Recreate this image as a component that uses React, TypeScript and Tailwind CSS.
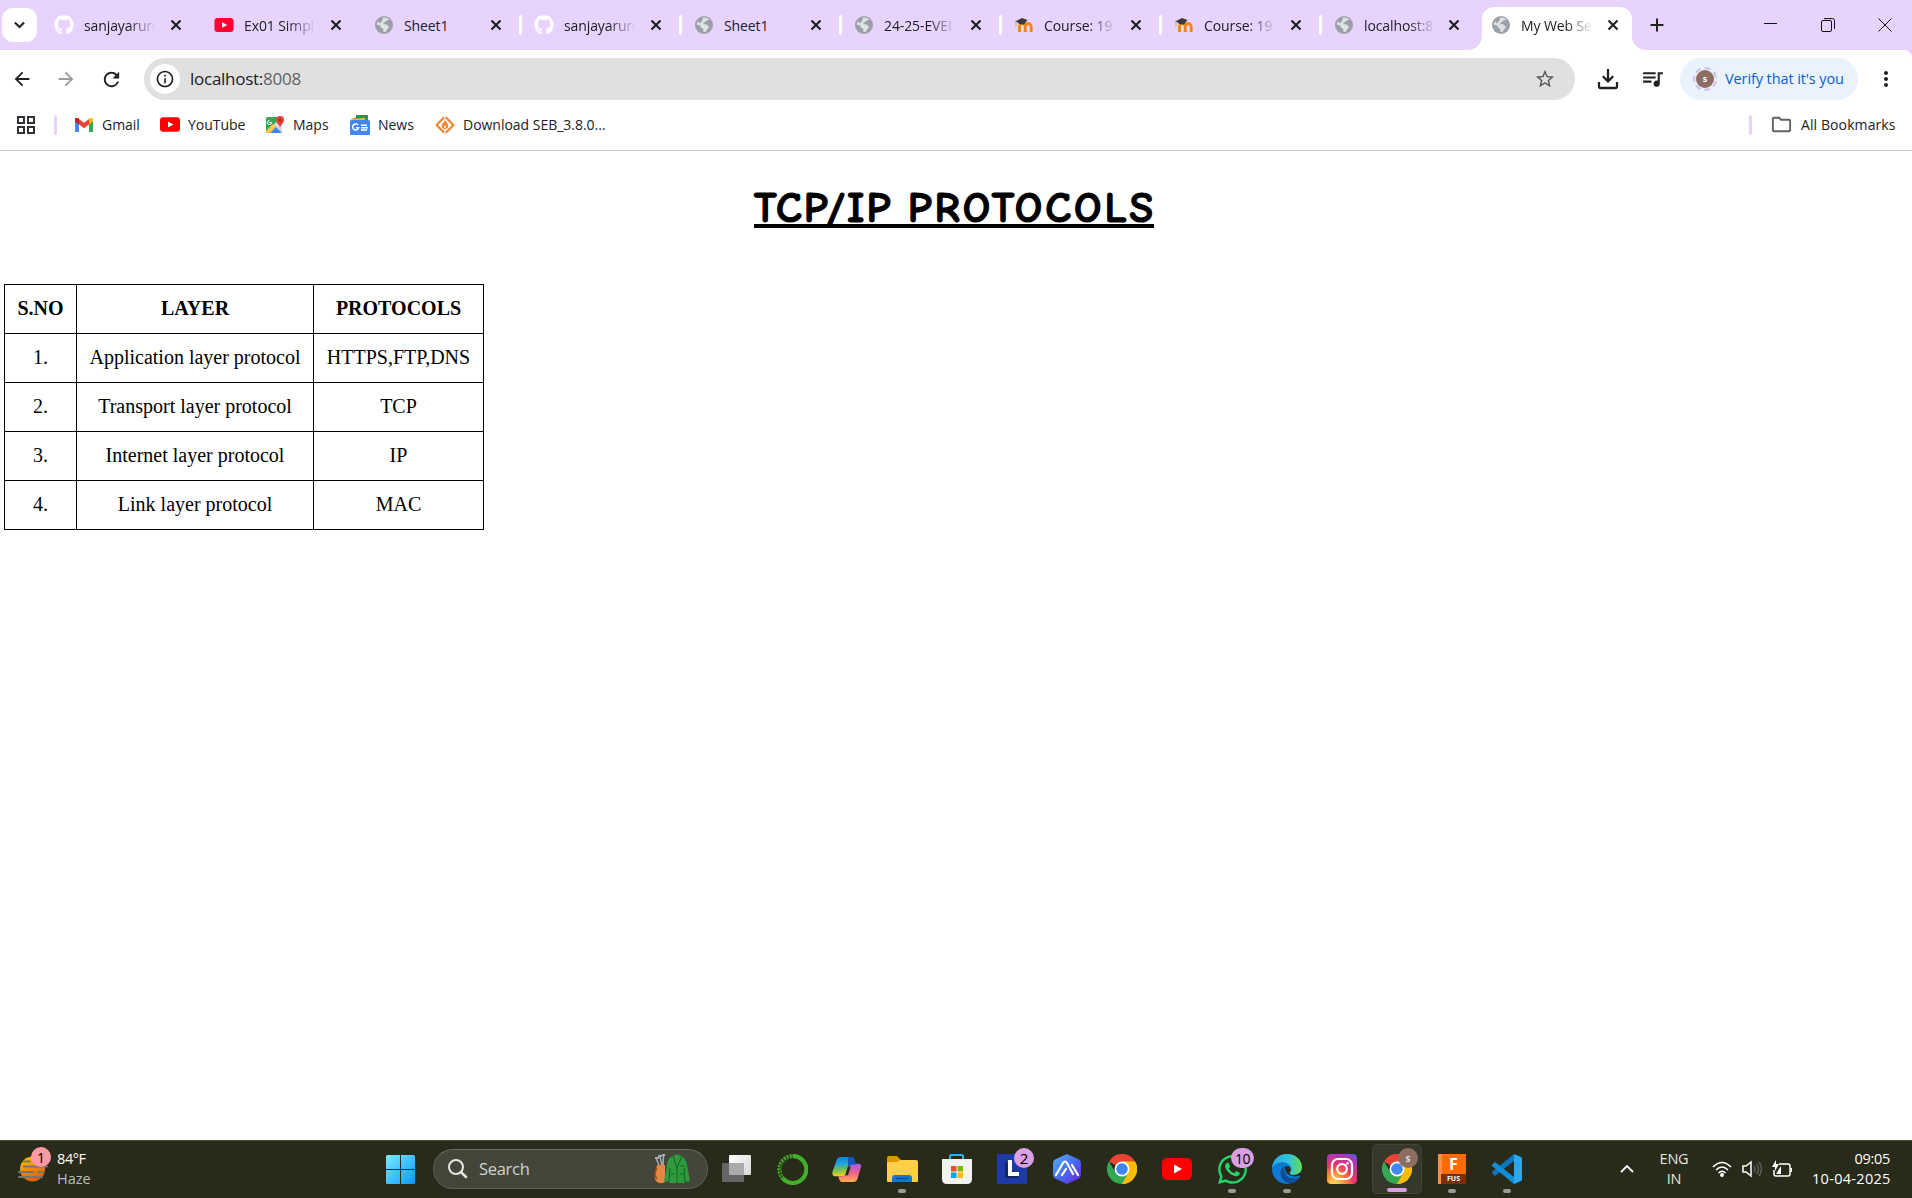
import type { ReactNode } from 'react';
import { FaGithub, FaWhatsapp } from 'react-icons/fa';
import { MdArrowBack, MdArrowForward, MdMoreVert, MdOutlineFolder, MdQueueMusic, MdRefresh, MdStarBorder, MdInfoOutline } from 'react-icons/md';

const UI = "font-['Open_Sans','Noto_Sans',sans-serif]";

function Globe() {
  return (
    <svg viewBox="0 0 20 20" className="size-5">
      <circle cx="10" cy="10" r="9" fill="#9aa0a6" />
      <path d="M8.4 2.7c2.8-.7 5.2.2 6.7 1.8-.4.8-1.4.9-2.2.7-.6 1.3-1.7 1.2-2.3 1.5-.1 1.2-.8 2-1.8 2 .2.8 1.5.4 3 .6 1.2.2 1.3 1.4 2.4 1.8 1 .4.9 1.5.2 2.2-.8.8-1.5 1-1.9 2.3-.5 1.2-1.6 1.6-2.9 1.7-.7-.9.2-1.9-.2-3-.5-1.1-2.1-1-2.6-2.6C6.400 10.500 4.800 9.700 2.800 9.900c0-1.200.4-2.400 1-3.400 1.500.6 1.700 1.800 2.800 1.500 1-.3.3-1.600 1.200-2.300.9-.6 1.600-.9.6-3z" fill="#dfe1e5" />
    </svg>
  );
}

function Close({ cls }: { cls: string }) {
  return (
    <svg viewBox="0 0 16 16" className={'size-4 shrink-0 ' + cls}><path d="m3.500 3.500 9 9m0-9-9 9" stroke="#202124" strokeWidth="2.200" /></svg>
  );
}

function YouTube({ cls, fill = '#ff0000' }: { cls: string; fill?: string }) {
  return (
    <svg viewBox="0 0 30 22" className={cls}>
      <rect width="30" height="22" rx="5" fill={fill} />
      <path d="M12 6.500 20 11l-8 4.500z" fill="#fff" />
    </svg>
  );
}

function Moodle() {
  return (
    <svg viewBox="0 0 20 20" className="size-5">
      <path d="M5.500 17V11.500a2.700 2.700 0 0 1 5.700 0V17M11.200 17V11.500a3 3 0 0 1 6 0V17" fill="none" stroke="#f98012" strokeWidth="2.800" />
      <path d="M1 6.500 8 3l5.500 2-3.500 4.500-5-.5-1-1.500z" fill="#3b3b3b" />
      <path d="M2 6.500v5" stroke="#d9a383" strokeWidth="1" />
    </svg>
  );
}

const github = <FaGithub className="size-5 text-white" />;
const tabs: { icon: ReactNode; title: string; sep?: boolean; fade: boolean }[] = [
  { icon: github, title: 'sanjayarun', fade: true },
  { icon: <YouTube cls="h-[14px] w-5" fill="#ff0033" />, title: 'Ex01 Simpl', fade: true },
  { icon: <Globe />, title: 'Sheet1', fade: false, sep: true },
  { icon: github, title: 'sanjayarun', fade: true, sep: true },
  { icon: <Globe />, title: 'Sheet1', fade: false, sep: true },
  { icon: <Globe />, title: '24-25-EVEI', fade: true, sep: true },
  { icon: <Moodle />, title: 'Course: 19', fade: true, sep: true },
  { icon: <Moodle />, title: 'Course: 19', fade: true, sep: true },
  { icon: <Globe />, title: 'localhost:8', fade: true },
];

function TabTitle({ title, fade }: { title: string; fade: boolean }) {
  return (
    <span
      className={
        'ml-[10px] w-[72px] shrink-0 whitespace-nowrap text-[14px] tracking-[-0.1px] text-[#202124] ' +
        (fade ? '[mask-image:linear-gradient(to_right,black_62%,transparent_100%)]' : '')
      }
    >
      {title}
    </span>
  );
}

function TabStrip() {
  return (
    <div className="flex h-[50px] bg-[#e8d3ff]">
      <div className="flex w-[46px] shrink-0 items-center pl-[2px]">
        <div className="flex h-[34px] w-[35px] items-center justify-center rounded-[11px] bg-white">
          <svg viewBox="0 0 12 8" className="h-[8px] w-[11px]"><path d="M1 1.200 6 6.200l5-5" fill="none" stroke="#202124" strokeWidth="2.300" /></svg>
        </div>
      </div>
      {tabs.map((t, i) => (
        <div key={i} className={'flex shrink-0 items-center pl-2 ' + (i === 8 ? 'w-[156px]' : 'w-[160px]')}>
          {t.icon}
          <TabTitle title={t.title} fade={t.fade} />
          <Close cls={i === 8 ? 'ml-[10px]' : 'ml-[12px]'} />
          {t.sep && <span className="ml-[15px] h-5 w-[3px] rounded-full bg-white" />}
        </div>
      ))}
      <div className="relative mt-[7px] flex w-[150px] shrink-0 items-center rounded-t-[12px] bg-white pb-[7px] pl-[9px]">
        <svg viewBox="0 0 14 14" className="absolute -left-[14px] bottom-0 size-[14px]"><path d="M14 0v14H0A14 14 0 0 0 14 0z" fill="#fff" /></svg>
        <svg viewBox="0 0 14 14" className="absolute -right-[14px] bottom-0 size-[14px]"><path d="M0 0v14h14A14 14 0 0 1 0 0z" fill="#fff" /></svg>
        <Globe />
        <TabTitle title="My Web Se" fade />
        <Close cls="ml-[12px]" />
      </div>
      <div className="flex w-[50px] items-center justify-center"><svg viewBox="0 0 14 14" className="size-[14px]"><path d="M7 .5v13M.5 7h13" stroke="#202124" strokeWidth="2" /></svg></div>
      <div className="ml-auto flex items-center gap-[43px] pr-[20px]">
        <svg viewBox="0 0 14 14" className="size-[14px]"><path d="M0 5.500h13" stroke="#111" strokeWidth="1" /></svg>
        <svg viewBox="0 0 14 14" className="size-[14px]"><rect x=".5" y="2.500" width="10" height="11" rx="1.500" fill="none" stroke="#111" /><path d="M3 .6h8.500a2 2 0 0 1 2 2V11" fill="none" stroke="#111" /></svg>
        <svg viewBox="0 0 14 14" className="size-[14px]"><path d="m.5.5 13 13m0-13-13 13" stroke="#111" strokeWidth="1" /></svg>
      </div>
    </div>
  );
}

function Toolbar() {
  return (
    <div className="flex bg-[#e8d3ff]">
      <div className="flex h-[58px] w-full items-center rounded-tr-[8px] bg-white">
        <MdArrowBack className="ml-[11px] size-[22px] text-[#202124]" />
        <MdArrowForward className="ml-[22px] size-[22px] text-[#9b9b9b]" />
        <MdRefresh className="ml-[23px] size-[23px] text-[#202124]" />
        <div className="ml-[21px] flex h-[42px] w-[1431px] items-center rounded-full bg-[#e0e0e0] pl-[6px] pr-[19px]">
          <div className="flex size-[30px] items-center justify-center rounded-full bg-white"><MdInfoOutline className="size-5 text-[#202124]" /></div>
          <span className="ml-[10px] text-[17px] tracking-[-0.260px] text-[#202124]">localhost:<span className="text-[#5f6368]">8008</span></span>
          <MdStarBorder className="ml-auto size-[22px] text-[#5a5a5a]" />
        </div>
        <svg viewBox="0 0 22 22" className="ml-[22px] size-[22px]" fill="none" stroke="#202124" strokeWidth="2.300"><path d="M11 1v12M5.800 8.200 11 13.400l5.200-5.200M2 14v4.500a1.500 1.500 0 0 0 1.500 1.500h15a1.500 1.500 0 0 0 1.500-1.500V14" /></svg>
        <MdQueueMusic className="ml-[21px] size-[25px] -translate-y-[1px] text-[#202124]" />
        <div className="ml-[15px] flex h-[42px] w-[178px] shrink-0 items-center rounded-full bg-[#eaf2fc] pl-[13px] text-[#0b5fd0]">
          <div className="flex size-6 items-center justify-center rounded-full border-2 border-dashed border-[#d4bdf0]">
            <span className="flex size-[18px] shrink-0 items-center justify-center rounded-full bg-[#8d6e63] text-[9px] font-bold text-white">s</span>
          </div>
          <span className="ml-[8px] whitespace-nowrap text-[14.500px] tracking-[-0.1px]">Verify that it's you</span>
        </div>
        <MdMoreVert className="ml-[16px] size-6 text-[#202124]" />
      </div>
    </div>
  );
}

function Bookmark({ icon, label, w }: { icon: ReactNode; label: string; w: string }) {
  return (
    <div className={'flex shrink-0 items-center ' + w}>
      <span className="flex w-[20px] justify-center">{icon}</span>
      <span className="ml-[8px] whitespace-nowrap">{label}</span>
    </div>
  );
}

function Bookmarks() {
  return (
    <div className="flex h-[43px] items-center border-b border-[#c9c9c9] bg-white pb-[9px] text-[14px] tracking-[-0.020px] text-[#202124]">
      <svg viewBox="0 0 18 18" className="ml-[17px] size-[18px]" fill="none" stroke="#303134" strokeWidth="2"><path d="M1 1h6v6H1zM11 1h6v6h-6zM1 11h6v6H1zM11 11h6v6h-6z" /></svg>
      <span className="ml-[19px] h-5 w-[3px] rounded-full bg-[#e8d3ff]" />
      <div className="ml-[17px] flex">
        <Bookmark w="w-[86px]" label="Gmail" icon={
          <svg viewBox="0 0 18 14" className="h-[14px] w-[18px]"><path d="M0 2v11a1 1 0 0 0 1 1h3V5z" fill="#4285f4" /><path d="M18 2v11a1 1 0 0 1-1 1h-3V5z" fill="#34a853" /><path d="M14 1v5.500l4-3V2a2 2 0 0 0-4-1z" fill="#fbbc04" /><path d="M4 1v5.500l-4-3V2a2 2 0 0 1 4-1z" fill="#c5221f" /><path d="M4 1v5.500l5 3.800 5-3.800V1L9 4.800z" fill="#ea4335" /></svg>
        } />
        <Bookmark w="w-[105px]" label="YouTube" icon={<YouTube cls="h-[15px] w-5" />} />
        <Bookmark w="w-[85px]" label="Maps" icon={
          <svg viewBox="0 0 20 20" className="size-5"><rect x="1" y="2" width="16" height="16" rx="2" fill="#34a853" /><path d="M1 18 13 5l4 4v9z" fill="#dadce0" /><path d="m3 18 7-7 7 7z" fill="#4285f4" /><path d="m8 9 3 3-6 6H1v-2z" fill="#fbcb43" /><path d="M4.500 5.500a2 2 0 1 0 2 2h-2" fill="none" stroke="#fff" /><path d="M15 13c0-3-4-4.500-4-8a4 4 0 0 1 8 0c0 3.500-4 5-4 8z" fill="#ea4335" /><circle cx="15" cy="5" r="1.500" fill="#a52714" /></svg>
        } />
        <Bookmark w="w-[85px]" label="News" icon={
          <svg viewBox="0 0 20 20" className="size-5"><path d="m2 4 8-3 1 7H3z" fill="#ea4335" /><path d="M6 0h12v8H6z" fill="#1e9b50" /><path d="m1 4 14-1v5H1z" fill="#fbbc04" /><rect y="5" width="20" height="15" rx="1.500" fill="#4285f4" /><path d="M8 10a3 3 0 1 0 .6 2.800H6M11 10.300h6M11 12.700h7M11 15h6" fill="none" stroke="#fff" strokeWidth="1.500" /></svg>
        } />
        <Bookmark w="w-[190px]" label="Download SEB_3.8.0..." icon={
          <svg viewBox="0 0 20 20" className="size-5"><rect x="4" y="4" width="12" height="12" rx="1" transform="rotate(45 10 10)" fill="none" stroke="#f4842d" strokeWidth="2.200" /><path d="M10 0v3M10 17v3" stroke="#fff" strokeWidth="1.500" /><path d="M10 4.500c.5 2.500 3.200 3.500 3.200 6.200a3.200 3.200 0 0 1-6.400 0c0-2.500 2.700-3 3.200-6.200z" fill="#f4842d" /><path d="M10 9.500c0 1.500 1 1.500 1 2.500a1 1 0 0 1-2 0c0-1 1-1 1-2.500z" fill="#fff" /></svg>
        } />
      </div>
      <span className="ml-auto h-5 w-[3px] rounded-full bg-[#e8d3ff]" />
      <MdOutlineFolder className="ml-[18px] size-[23px] text-[#5f6368]" />
      <span className="ml-[8px] mr-4 w-[95px] whitespace-nowrap tracking-[0.100px]">All Bookmarks</span>
    </div>
  );
}

const rows = [
  ['1.', 'Application layer protocol', 'HTTPS,FTP,DNS'],
  ['2.', 'Transport layer protocol', 'TCP'],
  ['3.', 'Internet layer protocol', 'IP'],
  ['4.', 'Link layer protocol', 'MAC'],
];

function Page() {
  return (
    <main className="flex-1 bg-white font-['Liberation_Serif','Times_New_Roman',serif] text-black">
      <h1 className="mx-auto mt-[27px] h-[60px] w-[400px] translate-x-[-2px] whitespace-nowrap font-['Comic_Sans_MS','Comic_Neue','Noto_Sans',sans-serif] text-[43px] font-bold leading-[60px]">
        <span className="flex h-[50px] w-[400px] items-center justify-between border-b-[4px] border-black pt-[13px] [-webkit-text-stroke:1.2px_black]"><span className="tracking-[2px]">TCP/IP</span><span className="-mr-[2px] tracking-[3px]">PROTOCOLS</span></span>
      </h1>
      <table className="ml-1 mt-[46px] w-[480px] table-fixed border-collapse text-center text-[20px] leading-[24px]">
        <colgroup><col className="w-[72px]" /><col className="w-[237px]" /><col className="w-[170px]" /></colgroup>
        <thead>
          <tr className="h-[49px]">
            {['S.NO', 'LAYER', 'PROTOCOLS'].map((h) => <th key={h} className="border border-black p-0 pb-[2px] font-bold">{h}</th>)}
          </tr>
        </thead>
        <tbody>
          {rows.map((r) => (
            <tr key={r[0]} className="h-[49px]">
              {r.map((c) => <td key={c} className="border border-black p-0 pb-[2px]">{c}</td>)}
            </tr>
          ))}
        </tbody>
      </table>
    </main>
  );
}

function Chrome() {
  return (
    <svg viewBox="0 0 48 48" className="size-[30px]">
      <path d="M24 24 3.200 12A24 24 0 0 1 44.800 12H24z" fill="#ea4335" />
      <path d="M24 12h20.800A24 24 0 0 1 24 48l10.400-18z" fill="#fbbc05" />
      <path d="M3.200 12 13.600 30 24 36l5.500-.500L24 48A24 24 0 0 1 3.200 12z" fill="#34a853" />
      <path d="m34.400 30-10.400 18-2-10z" fill="#fbbc05" />
      <path d="M13.600 30A12 12 0 0 0 34.400 30L24 48z" fill="#34a853" />
      <path d="M34.400 30 24 48A24 24 0 0 0 44.800 12H24z" fill="#fbbc05" />
      <circle cx="24" cy="24" r="12" fill="#fff" /><circle cx="24" cy="24" r="9.300" fill="#4285f4" />
    </svg>
  );
}

function Slot({ children, mark, active }: { children: ReactNode; mark?: boolean; active?: boolean }) {
  return (
    <div className="flex w-[55px] shrink-0 justify-center">
      <div className={'relative flex h-[50px] w-[50px] items-center justify-center rounded-[5px] ' + (active ? 'border border-[#424438] bg-[#36382b]' : '')}>
        {children}
        {mark && <span className={'absolute bottom-[1px] left-1/2 h-[4px] -translate-x-1/2 rounded-full ' + (active ? 'w-5 bg-[#d9a0e4]' : 'w-2 bg-[#9b9b94]')} />}
      </div>
    </div>
  );
}

function Taskbar() {
  return (
    <footer className="flex h-[58px] items-center border-t border-[#45483c] bg-[#282a1a] pb-[1px] text-white">
      <div className="flex w-[386px] items-center pl-[18px]">
        <div className="relative size-[34px] -translate-y-[1px]">
          <svg viewBox="0 0 34 34" className="size-[34px]">
            <defs><linearGradient id="sun" x2=".4" y2="1"><stop stopColor="#ffc400" /><stop offset="1" stopColor="#e66000" /></linearGradient></defs>
            <circle cx="14.500" cy="18" r="12.500" fill="url(#sun)" />
            <path d="M6 10.500h6M6 15.500h23M1 21h14M20 21h5M1 26h23" stroke="#77766c" strokeWidth="2.200" strokeLinecap="round" />
          </svg>
          <span className="absolute left-[13px] -top-[4px] flex size-5 items-center justify-center rounded-full bg-[#ff99a4] text-[14px] text-black">1</span>
        </div>
        <div className="ml-[5px] text-[14.500px] leading-[20px]"><div className="tracking-[-0.4px]">84°F</div><div className="text-[#bdbdb8]">Haze</div></div>
      </div>
      <svg viewBox="0 0 29 29" className="size-[29px]"><defs><linearGradient id="win" x2="1" y2="1"><stop stopColor="#79ecff" /><stop offset="1" stopColor="#0998ff" /></linearGradient></defs><path d="M0 1.500Q0 0 1.500 0H14v14H0zM15 0h12.500Q29 0 29 1.500V14H15zM0 15h14v14H1.500Q0 29 0 27.500zM15 15h14v12.500q0 1.500-1.500 1.500H15z" fill="url(#win)" /></svg>
      <div className="ml-[18px] flex h-10 w-[275px] shrink-0 items-center rounded-full border border-[#5b5d4f] border-t-[#6c6e62] bg-[#44463a] pl-[14px]">
        <svg viewBox="0 0 20 20" className="size-5" fill="none" stroke="#e6e6e6" strokeLinecap="round"><circle cx="8" cy="8" r="7" strokeWidth="2" /><path d="m13 13 5 5" strokeWidth="2.500" /></svg>
        <span className="ml-[11px] text-[16.500px] tracking-[-0.3px] text-[#d2d2ce]">Search</span>
        <svg viewBox="0 0 38 30" className="ml-auto mr-[16px] h-[30px] w-[38px]">
          <path d="m9 11-2-8m3 8 .5-9M6 11 3 4" stroke="#a8adb5" strokeWidth="1.500" /><path d="M2 4h4M5 2h4M9 1h3" stroke="#a8adb5" strokeWidth="2" />
          <path d="M4 11h8v17q-5 3-9-1c-3-4 0-9 1-16z" fill="#e48742" /><path d="M4 14q-4 6 0 11" stroke="#9c4d1a" fill="none" strokeWidth="1.500" />
          <path d="M20 2q4-3 8 0c4 1 5 5 6 9l3 16-5 1-1 1H17l-1-1-5-1 3-16c1-5 2-8 6-9z" fill="#2f9a3d" />
          <path d="m20 2 4 12 5-12M24 14v15M16 28l1-14M32 28l-1-14M27 12h4M18 20h3M27 20h4" stroke="#146422" fill="none" />
        </svg>
      </div>
      <div className="ml-[1.500px] flex">
        <Slot><svg viewBox="0 0 30 30" className="size-[30px]"><defs><linearGradient id="tv" y2="1" x2="1"><stop stopColor="#fff" /><stop offset="1" stopColor="#d6d6d6" /></linearGradient></defs><rect x="0" y="9" width="22" height="19" rx="1" fill="#666" /><rect x="7" y="1" width="22" height="20" rx="1" fill="url(#tv)" /><path d="M7 9h15v12H7z" fill="#aaa" /></svg></Slot>
        <Slot><svg viewBox="0 0 30 30" className="size-[31px]" fill="none" stroke="#43b02a"><path d="M15 2a13 13 0 1 1-9 22" strokeWidth="4" /><path d="M6 24A13 13 0 0 1 15 2" strokeWidth="4" strokeDasharray="2 1" /><path d="M4 21A13 13 0 0 1 13 3" strokeWidth="1.200" stroke="#282a1a" strokeDasharray="1 2" /></svg></Slot>
        <Slot><svg viewBox="0 0 30 28" className="h-[27px] w-[30px]"><defs><linearGradient id="ca" y2="1" x2=".1"><stop stopColor="#1479d8" /><stop offset=".4" stopColor="#23a7d5" /><stop offset=".7" stopColor="#79bf4d" /><stop offset="1" stopColor="#f5cf22" /></linearGradient><linearGradient id="cb" y2="1" x2="0"><stop stopColor="#a45ce9" /><stop offset=".5" stopColor="#ef6190" /><stop offset="1" stopColor="#ffb04c" /></linearGradient></defs><path d="M8 1h12q2 0 3 4l1 4h-4q-3 0-4 3l-2 6q-1 3-4 3H3q-4 0-3-5L4 5q1-4 4-4z" fill="url(#ca)" /><path d="M22 8h5q4 0 2 5l-3 10q-1 4-5 4H10q-3 0-4-6h4q3 0 4-3l3-7q1-3 5-3z" fill="url(#cb)" /><path d="M16 1h4q2 0 3 4l1 4h-4q-3 0-4 3z" fill="#1557c0" /><path d="m16 11-3 9h3l3-9z" fill="#282a1a" /></svg></Slot>
        <Slot mark><svg viewBox="0 0 31 27" className="h-[27px] w-[31px]"><path d="M0 2q0-2 2-2h8l4 4h15v8H0z" fill="#dc9800" /><path d="M0 6h10l3-2h16q2 0 2 2v19q0 1-1 1H1q-1 0-1-1z" fill="#ffcf48" /><path d="M5 26v-4q0-3 3-3h14q3 0 3 3v4z" fill="#1179ce" /><path d="M9 22.500h12" stroke="#0a4f94" strokeWidth="1.500" /></svg></Slot>
        <Slot><svg viewBox="0 0 30 30" className="size-[30px]"><path d="M8 7V2q0-1 1-1h11q1 0 1 1v5" fill="none" stroke="#26b1e8" strokeWidth="2" /><path d="M0 5h30v20q0 5-5 5H5q-5 0-5-5z" fill="#f2f2f2" /><path d="M9 12h5.500v5.500H9z" fill="#f25022" /><path d="M15.500 12H21v5.500h-5.500z" fill="#7fba00" /><path d="M9 18.500h5.500V24H9z" fill="#00a4ef" /><path d="M15.500 18.500H21V24h-5.500z" fill="#ffb900" /></svg></Slot>
        <Slot>
          <span className="flex size-[30px] items-center justify-center bg-[#1d3aa8]"><svg viewBox="0 0 30 30" className="size-[30px]"><path d="M8 7v17h14l-3-4z" fill="#102765" /><path d="M13 6v14h9" fill="none" stroke="#fff" strokeWidth="4" /></svg></span>
          <span className="absolute left-[27px] top-[4px] flex size-5 items-center justify-center rounded-full bg-[#d9a0e4] text-[15px] text-black">2</span>
        </Slot>
        <Slot><svg viewBox="0 0 28 30" className="h-[30px] w-[28px]"><defs><linearGradient id="hx" x2="1" y2="1"><stop stopColor="#4eb8ee" /><stop offset=".55" stopColor="#4a65ec" /><stop offset="1" stopColor="#6e1ee0" /></linearGradient></defs><path d="m14 0 11 5q3 1 3 5v10q0 4-3 5l-11 5-11-5q-3-1-3-5V10q0-4 3-5z" fill="url(#hx)" /><path d="m3 21 7-12q2-3 4 0l6 11M9 21l4-6M19 11l6 10" fill="none" stroke="#fff" strokeWidth="2.200" strokeLinecap="round" /></svg></Slot>
        <Slot><Chrome /></Slot>
        <Slot><YouTube cls="h-[22px] w-[30px]" /></Slot>
        <Slot mark>
          <FaWhatsapp className="size-[33px] text-[#25d366]" />
          <span className="absolute left-[24px] top-[4px] flex h-5 w-[23px] items-center justify-center rounded-full bg-[#d9a0e4] text-[14px] tracking-[-0.500px] text-black">10</span>
        </Slot>
        <Slot mark><svg viewBox="0 0 30 30" className="size-[30px]"><defs><linearGradient id="eg" x2="1"><stop stopColor="#2aa8ea" /><stop offset=".55" stopColor="#32c4d8" /><stop offset="1" stopColor="#68da50" /></linearGradient></defs><circle cx="15" cy="15" r="15" fill="#0e79d2" /><path d="M0 14C1 5 7 0 15 0c9 0 15 6 15 13 0 5-4 8-8 8-3 0-5-1-4-3 1-1 2-2 1-5C16 6 4 7 0 14z" fill="url(#eg)" /><path d="M12 12c-6 4-4 14 4 17 5 1 10-2 12-6-8 4-17 0-16-11z" fill="#104c98" /><path d="M13 12c-1 6 4 12 14 10l3-1v-5c-2 4-6 5-9 5-3 0-4-1-3-3 1-1 1-3 0-5z" fill="#282a1a" /></svg></Slot>
        <Slot><svg viewBox="0 0 30 30" className="size-[30px]"><defs><radialGradient id="ig" cx=".25" cy="1" r="1.200"><stop stopColor="#ffe060" /><stop offset=".3" stopColor="#ff8a32" /><stop offset=".55" stopColor="#ea3468" /><stop offset=".8" stopColor="#b536b4" /><stop offset="1" stopColor="#5458d6" /></radialGradient></defs><rect width="30" height="30" rx="4" fill="url(#ig)" /><g fill="none" stroke="#fff" strokeWidth="2.200"><rect x="5" y="5" width="20" height="20" rx="6" /><circle cx="15" cy="15" r="4.800" /></g><circle cx="20.500" cy="9.500" r="1.400" fill="#fff" /></svg></Slot>
        <Slot mark active>
          <Chrome />
          <span className="absolute left-[25px] top-[3px] flex size-5 items-center justify-center rounded-full bg-[#8d6e63] text-[10px] font-bold text-[#ddd]">s</span>
        </Slot>
        <Slot mark>
          <span className="flex h-[30px] w-[28px] flex-col items-end bg-linear-to-r from-[#ff8d46] from-15% to-[#ff6b00] to-16%">
            <span className="flex h-[20px] w-[25px] items-center justify-center text-[16px] font-bold">F</span>
            <span className="flex h-[10px] w-[25px] items-center justify-center bg-[#7b3008] text-[7px] font-bold">FUS</span>
          </span>
        </Slot>
        <Slot mark><svg viewBox="0 0 30 30" className="size-[30px]"><path d="M22 7 3 22l-3-3V18L22 0z" fill="#0c75bd" /><path d="M0 11 3 8l19 15v7L0 12z" fill="#128fd9" /><path d="m22 0 7 3q1 .500 1 2v20q0 1.500-1 2l-7 3z" fill="#28a8f1" /></svg></Slot>
      </div>
      <svg viewBox="0 0 14 8" className="ml-auto h-[8px] w-[14px]"><path d="m1 7 6-6 6 6" fill="none" stroke="#fff" strokeWidth="1.800" /></svg>
      <div className="ml-[23px] w-[34px] text-center text-[14.500px] leading-[20px] tracking-[-0.200px] text-[#e4e4e0]">ENG<br />IN</div>
      <svg viewBox="0 0 20 16" className="ml-[21px] h-4 w-5" fill="none" stroke="#fff" strokeWidth="1.500"><path d="M1 6q9-9 18 0M4 9q6-6 12 0M6.500 12q3.500-3.500 7 0" /><circle cx="10" cy="14" r="1.200" fill="#fff" /></svg>
      <svg viewBox="0 0 20 18" className="ml-[10px] h-[18px] w-5" fill="none" strokeWidth="1.500"><path d="M1 6v6h3l5 4V2L4 6z" stroke="#fff" /><path d="M12 6q2 3 0 6M14.500 4q4 5 0 10M17 2q5 7 0 14" stroke="#5c5e54" /></svg>
      <svg viewBox="0 0 20 18" className="ml-[10px] h-[18px] w-5"><path d="M7 4h9q2 0 2 2v8q0 2-2 2H4q-2 0-2-2v-4" fill="none" stroke="#fff" strokeWidth="1.500" /><path d="M18.500 8H20v4h-1.500zM4 14l5-8v8zM4 0 0 7h3v4l4-7H4z" fill="#fff" /></svg>
      <div className="ml-[20px] mr-[22px] w-[78px] whitespace-nowrap text-right text-[14.500px] leading-[20px]"><div className="tracking-[-0.300px]">09:05</div><div className="tracking-[0.300px]">10-04-2025</div></div>
    </footer>
  );
}

export default function App() {
  return (
    <div className={'flex h-[1198px] w-[1912px] flex-col overflow-hidden bg-white ' + UI}>
      <TabStrip />
      <Toolbar />
      <Bookmarks />
      <Page />
      <Taskbar />
    </div>
  );
}
